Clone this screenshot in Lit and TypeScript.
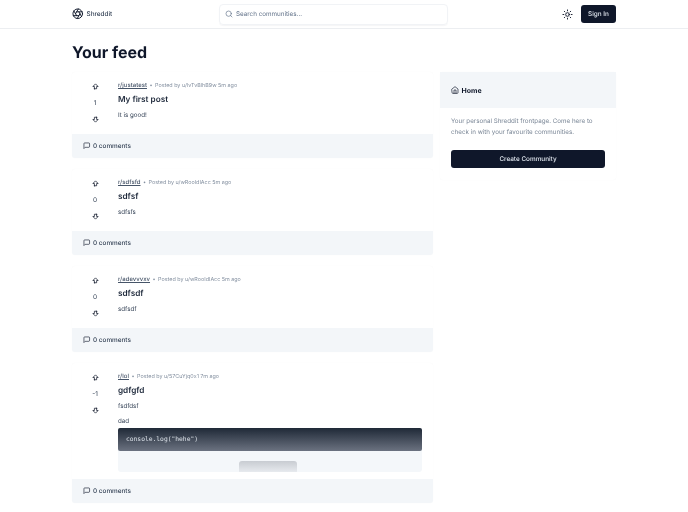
import { LitElement, html, css, svg } from "lit";
import { customElement } from "lit/decorators.js";

const icon = (body: unknown, size: number, sw = 2) => html`<svg class="ic" width=${size} height=${size} viewBox="0 0 24 24" fill="none" stroke="currentColor" stroke-width=${sw} stroke-linecap="round" stroke-linejoin="round">${body}</svg>`;
const up = svg`<path d="M9 18v-6H5l7-7 7 7h-4v6H9z"/>`;
const down = svg`<path d="M15 6v6h4l-7 7-7-7h4V6h6z"/>`;
const msg = svg`<path d="M21 15a2 2 0 0 1-2 2H7l-4 4V5a2 2 0 0 1 2-2h14a2 2 0 0 1 2 2z"/>`;
const aperture = svg`<circle cx="12" cy="12" r="10"/><path d="m14.31 8 5.74 9.94"/><path d="M9.69 8h11.48"/><path d="m7.38 12 5.74-9.94"/><path d="M9.69 16 3.95 6.06"/><path d="M14.31 16H2.83"/><path d="m16.62 12-5.74 9.94"/>`;
const search = svg`<circle cx="11" cy="11" r="8"/><path d="m21 21-4.3-4.3"/>`;
const sun = svg`<circle cx="12" cy="12" r="4"/><path d="M12 2v2"/><path d="M12 20v2"/><path d="m4.93 4.93 1.41 1.41"/><path d="m17.66 17.66 1.41 1.41"/><path d="M2 12h2"/><path d="M20 12h2"/><path d="m6.34 17.66-1.41 1.41"/><path d="m19.07 4.93-1.41 1.41"/>`;
const home = svg`<path d="m3 9 9-7 9 7v11a2 2 0 0 1-2 2H5a2 2 0 0 1-2-2z"/><path d="M9 22V12h6v10"/>`;

const posts = [
  { sub: "r/justatest", by: "Posted by u/lvTvBlhB9w 5m ago", votes: "1", title: "My first post", body: ["It is good!"], code: false },
  { sub: "r/sdfsfd", by: "Posted by u/wRooIdIAcc 5m ago", votes: "0", title: "sdfsf", body: ["sdfsfs"], code: false },
  { sub: "r/adevvvxv", by: "Posted by u/wRooIdIAcc 5m ago", votes: "0", title: "sdfsdf", body: ["sdfsdf"], code: false },
  { sub: "r/lol", by: "Posted by u/57CuYjq0x1 7m ago", votes: "-1", title: "gdfgfd", body: ["fsdfdsf", "dad"], code: true },
];

@customElement("app-root")
export class AppRoot extends LitElement {
  static styles = css`
    :host { display: block; height: 512px; overflow: hidden; background: #fff; color: #0f172a; font-family: Inter, "Liberation Sans", sans-serif; filter: blur(0.3px); text-rendering: geometricPrecision; }
    .ic { display: block; flex: none; }
    nav { height: 28px; border-bottom: 1px solid #eceef1; display: flex; align-items: center; padding: 0 72px; }
    .brand { display: flex; align-items: center; gap: 3px; width: 147px; font-size: 6.4px; font-weight: 500; color: #334155; }
    .brand .ic { color: #0f172a; }
    .search { width: 229px; height: 21px; box-sizing: border-box; border: 1px solid #f1f3f6; border-radius: 4px; display: flex; align-items: center; gap: 3px; padding-left: 5px; font-size: 6.3px; color: #64748b; box-shadow: 0 1px 1px rgba(15,23,42,.04); }
    .search .ic { color: #64748b; }
    .right { margin-left: auto; display: flex; align-items: center; gap: 8px; }
    .signin { background: #0f172a; color: #e2e8f0; font-size: 6.4px; font-weight: 500; width: 35px; height: 18px; border-radius: 3px; display: flex; align-items: center; justify-content: center; }
    main { padding: 13px 72px 0; }
    h1 { margin: 0 0 10px; font-size: 16px; line-height: 20px; font-weight: 700; color: #0f172a; }
    .grid { display: grid; grid-template-columns: 361px 176px; column-gap: 7px; align-items: start; }
    .feed { display: flex; flex-direction: column; gap: 11px; }
    .post { border-radius: 3px; box-shadow: 0 0 1px rgba(15,23,42,.05); }
    .top { display: flex; padding: 8px 11px 0 0; height: 54px; }
    .post.code .top { height: 108px; }
    .votes { width: 46px; flex: none; display: flex; flex-direction: column; align-items: center; padding-top: 2px; gap: 7px; font-size: 6.5px; color: #334155; box-sizing: border-box; }
    .votes .n { line-height: 10px; height: 10px; }
    .votes .ic { color: #0f172a; }
    .content { flex: 1; min-width: 0; }
    .meta { font-size: 5.4px; line-height: 10px; color: #8490a0; display: flex; gap: 2.5px; align-items: center; white-space: nowrap; margin-top: 1px; }
    .meta a { color: #475569; text-decoration: underline; font-size: 6px; font-weight: 500; }
    h3 { margin: 1.5px 0 0; font-size: 8.2px; line-height: 13px; font-weight: 600; color: #1e293b; }
    .body p { margin: 4px 0 0; font-size: 6.2px; line-height: 11px; color: #334155; }
    .body p + p { margin-top: 4px; }
    .codewrap { margin-top: 1.5px; height: 44px; position: relative; background: #f4f7fa; border-radius: 3px; }
    .codeblock { height: 23px; box-sizing: border-box; border-radius: 2px; background: linear-gradient(#1f2937, #6b7280); padding: 0 8px; display: flex; align-items: center; font-family: "DejaVu Sans Mono", "Liberation Mono", monospace; font-size: 6.3px; color: #dbe1e8; }
    .fade { position: absolute; left: 50%; top: 33px; width: 58px; height: 11px; margin-left: -31px; background: linear-gradient(#c8ccd2, #e7eaee); border-radius: 3px 3px 0 0; }
    .foot { height: 24px; background: #f3f6f9; border-radius: 0 0 3px 3px; display: flex; align-items: center; gap: 2.5px; padding-left: 11px; font-size: 6.4px; font-weight: 500; color: #334155; }
    .foot .ic { color: #0f172a; }
    aside { min-height: 108px; border-radius: 3px; box-shadow: 0 0 1px rgba(15,23,42,.05); }
    .ah { height: 36px; background: #f3f6f9; display: flex; align-items: center; gap: 2.5px; padding-left: 11px; font-size: 7px; font-weight: 700; color: #0f172a; }
    .ab { padding: 8px 11px 11px; }
    .ab p { margin: 0; font-size: 6.25px; line-height: 11px; color: #7b8797; }
    .cta { margin-top: 12px; height: 18px; background: #0f172a; border-radius: 3px; color: #e2e8f0; font-size: 6.4px; font-weight: 500; display: flex; align-items: center; justify-content: center; }
  `;

  render() {
    return html`
      <nav>
        <div class="brand">${icon(aperture, 11.5, 2)}<span>Shreddit</span></div>
        <div class="search">${icon(search, 8)}<span>Search communities...</span></div>
        <div class="right">${icon(sun, 11, 2)}<div class="signin">Sign In</div></div>
      </nav>
      <main>
        <h1>Your feed</h1>
        <div class="grid">
          <div class="feed">
            ${posts.map((p) => html`
              <article class="post ${p.code ? "code" : ""}">
                <div class="top">
                  <div class="votes">${icon(up, 9)}<span class="n">${p.votes}</span>${icon(down, 9)}</div>
                  <div class="content">
                    <div class="meta"><a>${p.sub}</a><span>•</span><span>${p.by}</span></div>
                    <h3>${p.title}</h3>
                    <div class="body">${p.body.map((b) => html`<p>${b}</p>`)}</div>
                    ${p.code ? html`<div class="codewrap"><div class="codeblock">console.log("hehe")</div><div class="fade"></div></div>` : ""}
                  </div>
                </div>
                <div class="foot">${icon(msg, 7.5)}<span>0 comments</span></div>
              </article>`)}
          </div>
          <aside>
            <div class="ah">${icon(home, 8, 2)}<span>Home</span></div>
            <div class="ab">
              <p>Your personal Shreddit frontpage. Come here to check in with your favourite communities.</p>
              <div class="cta">Create Community</div>
            </div>
          </aside>
        </div>
      </main>
    `;
  }
}
